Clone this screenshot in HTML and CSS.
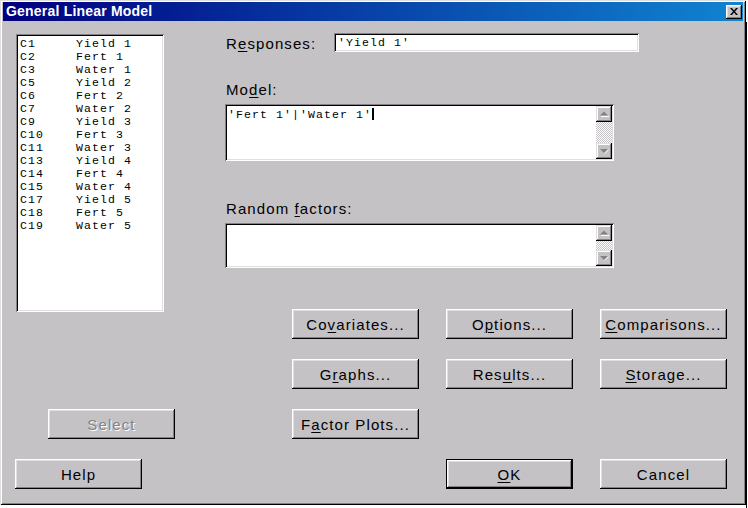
FILE: index.html
```html
<!DOCTYPE html>
<html>
<head>
<meta charset="utf-8">
<title>General Linear Model</title>
<link rel="stylesheet" href="styles.css">
</head>
<body>
<div class="screen">
  <div class="window">
    <div class="titlebar">
      <span class="title">General Linear Model</span>
      <span class="close">
        <svg width="16" height="14" viewBox="0 0 16 14"><path d="M4 3h2l2 2.5 2-2.5h2l-3 3.5 3 3.5h-2l-2-2.5-2 2.5h-2l3-3.5z" fill="#000"/></svg>
      </span>
    </div>
    <div class="body">
      <div class="left">
        <div class="listbox">
          <div class="row"><span>C1</span><span>Yield 1</span></div>
          <div class="row"><span>C2</span><span>Fert 1</span></div>
          <div class="row"><span>C3</span><span>Water 1</span></div>
          <div class="row"><span>C5</span><span>Yield 2</span></div>
          <div class="row"><span>C6</span><span>Fert 2</span></div>
          <div class="row"><span>C7</span><span>Water 2</span></div>
          <div class="row"><span>C9</span><span>Yield 3</span></div>
          <div class="row"><span>C10</span><span>Fert 3</span></div>
          <div class="row"><span>C11</span><span>Water 3</span></div>
          <div class="row"><span>C13</span><span>Yield 4</span></div>
          <div class="row"><span>C14</span><span>Fert 4</span></div>
          <div class="row"><span>C15</span><span>Water 4</span></div>
          <div class="row"><span>C17</span><span>Yield 5</span></div>
          <div class="row"><span>C18</span><span>Fert 5</span></div>
          <div class="row"><span>C19</span><span>Water 5</span></div>
        </div>
        <div class="btn disabled select-btn">Select</div>
        <div class="btn help-btn">Help</div>
      </div>
      <div class="right">
        <div class="resp-row">
          <span class="lbl resp-lbl">R<u>e</u>sponses:</span>
          <div class="field resp">'Yield 1'</div>
        </div>
        <div class="lbl model-lbl">Mo<u>d</u>el:</div>
        <div class="field area model">
          <div class="area-text">'Fert 1'|'Water 1'<span class="caret"></span></div>
          <div class="vscroll">
            <div class="sbtn"><svg width="12" height="12" viewBox="0 0 12 12"><path d="M2 7.5h8L6 3.5z" fill="#848284"/><rect x="3" y="8" width="8" height="1" fill="#fff"/></svg></div>
            <div class="track"></div>
            <div class="sbtn"><svg width="12" height="12" viewBox="0 0 12 12"><path d="M2 4h8l-4 4z" fill="#848284"/><path d="M10 4.5h1l-4.5 4.5v-1z" fill="#fff"/></svg></div>
          </div>
        </div>
        <div class="lbl rand-lbl">Random <u>f</u>actors:</div>
        <div class="field area random">
          <div class="area-text"></div>
          <div class="vscroll">
            <div class="sbtn"><svg width="12" height="12" viewBox="0 0 12 12"><path d="M2 7.5h8L6 3.5z" fill="#848284"/><rect x="3" y="8" width="8" height="1" fill="#fff"/></svg></div>
            <div class="track"></div>
            <div class="sbtn"><svg width="12" height="12" viewBox="0 0 12 12"><path d="M2 4h8l-4 4z" fill="#848284"/><path d="M10 4.5h1l-4.5 4.5v-1z" fill="#fff"/></svg></div>
          </div>
        </div>
        <div class="btn-grid">
          <div class="btn">Co<u>v</u>ariates...</div>
          <div class="btn">O<u>p</u>tions...</div>
          <div class="btn"><u>C</u>omparisons...</div>
          <div class="btn">G<u>r</u>aphs...</div>
          <div class="btn">Res<u>u</u>lts...</div>
          <div class="btn"><u>S</u>torage...</div>
          <div class="btn">F<u>a</u>ctor Plots...</div>
          <div class="btn default ok-btn"><u>O</u>K</div>
          <div class="btn cancel-btn">Cancel</div>
        </div>
      </div>
    </div>
  </div>
  <div class="edge"></div>
</div>
</body>
</html>
```

FILE: styles.css
```css
* { box-sizing: border-box; }
html, body { margin: 0; padding: 0; background: #ffffff; }
body { width: 748px; height: 508px; overflow: hidden; }

.screen { display: flex; align-items: flex-start; }

.window {
  width: 746px;
  height: 505px;
  background: #c5c2c5;
  padding: 2px 3px 3px 3px;
  box-shadow: inset 1px 1px #dfdfdf, inset -1px -1px #000, inset 2px 2px #fff, inset -2px -2px #848284;
  display: flex;
  flex-direction: column;
  font-family: "Liberation Sans", Arial, sans-serif;
  font-size: 15px;
  letter-spacing: 1.1px;
  color: #000;
}

.edge {
  margin-top: 22px;
  width: 2px;
  height: 486px;
  border-left: 1px solid #000;
}

.titlebar {
  height: 19px;
  background: linear-gradient(90deg, #000080, #1084d0);
  display: flex;
  align-items: center;
  justify-content: space-between;
  padding: 0 1px 0 3px;
}
.title {
  color: #fff;
  font-weight: bold;
  font-size: 14px;
  letter-spacing: 0.2px;
  line-height: 19px;
}
.close {
  width: 16px;
  height: 14px;
  background: #c5c2c5;
  box-shadow: inset -1px -1px #000, inset 1px 1px #fff, inset -2px -2px #848284, inset 2px 2px #dfdfdf;
  display: flex;
  margin-top: 1px;
}

.body { display: flex; flex: 1; }

.left {
  width: 210px;
  margin-left: 12px;
  display: flex;
  flex-direction: column;
  align-items: flex-start;
}

.listbox {
  margin: 13px 0 0 1px;
  width: 148px;
  height: 278px;
  background: #fff;
  padding: 3px 0 0 4px;
  box-shadow: inset 1px 1px #848284, inset -1px -1px #fff, inset 2px 2px #000, inset -2px -2px #dfdfdf;
  font-family: "Liberation Mono", "Courier New", monospace;
  font-size: 11.5px;
  letter-spacing: 1.1px;
  line-height: 13px;
}
.row { display: grid; grid-template-columns: 56px auto; white-space: pre; height: 13px; }

.btn {
  width: 127px;
  height: 30px;
  background: #c5c2c5;
  box-shadow: inset -1px -1px #000, inset 1px 1px #fff, inset -2px -2px #848284, inset 2px 2px #dfdfdf;
  display: flex;
  align-items: center;
  justify-content: center;
  padding-top: 1px;
  white-space: nowrap;
}
.btn u { text-decoration-thickness: 1px; text-underline-offset: 2px; }
.btn.default {
  box-shadow: inset 0 0 0 1px #000, inset -2px -2px #000, inset 2px 2px #fff, inset -3px -3px #848284, inset 3px 3px #dfdfdf;
}
.btn.disabled { color: #848284; text-shadow: 1px 1px 0 #fff; }

.select-btn { margin: 97px 0 0 33px; }
.help-btn { margin-top: 20px; }

.right { flex: 1; display: flex; flex-direction: column; align-items: flex-start; }

.lbl { line-height: 17px; margin-left: 1px; white-space: nowrap; }
.lbl u { text-decoration-thickness: 1px; text-underline-offset: 2px; }

.resp-row { display: flex; align-items: flex-start; margin-top: 12px; }
.resp-lbl { width: 108px; margin-top: 2px; }

.field {
  background: #fff;
  box-shadow: inset 1px 1px #848284, inset -1px -1px #fff, inset 2px 2px #000, inset -2px -2px #dfdfdf;
  font-family: "Liberation Mono", "Courier New", monospace;
  font-size: 11.5px;
  letter-spacing: 1.1px;
  line-height: 13px;
  white-space: pre;
}
.resp { width: 305px; height: 19px; padding: 3px 0 0 4px; }

.model-lbl { margin-top: 29px; }
.rand-lbl { margin-top: 39px; }

.area { width: 389px; padding: 2px; display: flex; margin-top: 6px; }
.model { height: 57px; }
.random { height: 45px; }
.area-text { flex: 1; padding: 2px 0 0 1px; }
.caret {
  display: inline-block;
  width: 2px;
  height: 12px;
  background: #000;
  vertical-align: -2px;
  margin-left: 0;
}

.vscroll { width: 16px; display: flex; flex-direction: column; }
.sbtn {
  width: 16px;
  height: 16px;
  background: #c5c2c5;
  box-shadow: inset -1px -1px #000, inset 1px 1px #dfdfdf, inset -2px -2px #848284, inset 2px 2px #fff;
  display: flex;
  align-items: center;
  justify-content: center;
}
.track {
  flex: 1;
  background: repeating-conic-gradient(#ffffff 0 25%, #c5c2c5 0 50%) 0 0 / 2px 2px;
}

.btn-grid {
  margin: 41px 0 0 67px;
  display: grid;
  grid-template-columns: repeat(3, 127px);
  grid-template-rows: repeat(4, 30px);
  column-gap: 27px;
  row-gap: 20px;
}
.ok-btn { grid-column: 2; grid-row: 4; }
.cancel-btn { grid-column: 3; grid-row: 4; }
```
